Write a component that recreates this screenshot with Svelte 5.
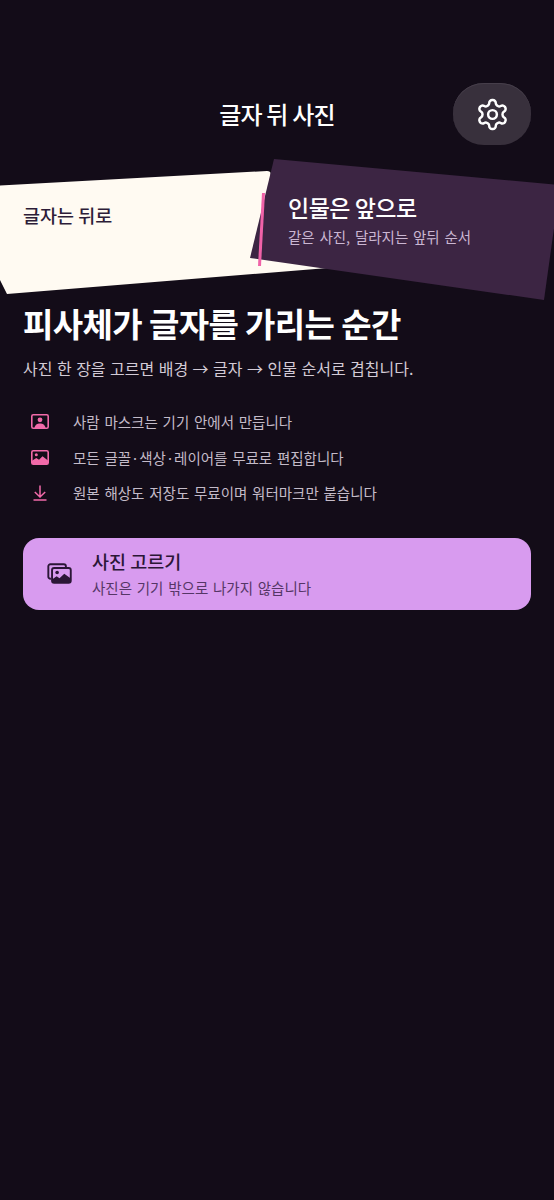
<script>
  const bullets = [
    { icon: 'person', text: '사람 마스크는 기기 안에서 만듭니다' },
    { icon: 'image', text: '모든 글꼴·색상·레이어를 무료로 편집합니다' },
    { icon: 'down', text: '원본 해상도 저장도 무료이며 워터마크만 붙습니다' }
  ];
</script>

<main class="page">
  <header class="top">
    <span></span>
    <h1>글자 뒤 사진</h1>
    <button class="gear" aria-label="설정">
      <svg viewBox="0 0 24 24" width="35" height="35" fill="none" stroke="currentColor" stroke-width="1.700" stroke-linecap="round" stroke-linejoin="round">
        <path d="M12.22 2h-.44a2 2 0 0 0-2 2v.18a2 2 0 0 1-1 1.73l-.43.25a2 2 0 0 1-2 0l-.15-.08a2 2 0 0 0-2.73.73l-.22.38a2 2 0 0 0 .73 2.73l.15.1a2 2 0 0 1 1 1.72v.51a2 2 0 0 1-1 1.74l-.15.09a2 2 0 0 0-.73 2.73l.22.38a2 2 0 0 0 2.73.73l.15-.08a2 2 0 0 1 2 0l.43.25a2 2 0 0 1 1 1.73V20a2 2 0 0 0 2 2h.44a2 2 0 0 0 2-2v-.18a2 2 0 0 1 1-1.73l.43-.25a2 2 0 0 1 2 0l.15.08a2 2 0 0 0 2.73-.73l.22-.39a2 2 0 0 0-.73-2.73l-.15-.08a2 2 0 0 1-1-1.74v-.5a2 2 0 0 1 1-1.74l.15-.09a2 2 0 0 0 .73-2.73l-.22-.38a2 2 0 0 0-2.73-.73l-.15.08a2 2 0 0 1-2 0l-.43-.25a2 2 0 0 1-1-1.73V4a2 2 0 0 0-2-2z"/>
        <circle cx="12" cy="12" r="3"/>
      </svg>
    </button>
  </header>

  <section class="hero">
    <svg class="shapes" viewBox="0 0 554 150" width="554" height="150">
      <path d="M-10 31 L267 16 Q271.500 16 270.500 20 L340 112 L7 139 L0 125 Z" fill="#fffaf2"/>
      <path d="M274 4 L560 30 L544 145 L250 103 Z" fill="#3c2543"/>
      <path d="M263.500 38 L259.500 111" stroke="#f062a8" stroke-width="3" fill="none"/>
    </svg>
    <p class="back">글자는 뒤로</p>
    <div class="front">
      <p class="front-title">인물은 앞으로</p>
      <p class="front-sub">같은 사진, 달라지는 앞뒤 순서</p>
    </div>
  </section>

  <section class="intro">
    <h2>피사체가 글자를 가리는 순간</h2>
    <p>사진 한 장을 고르면 배경 → 글자 → 인물 순서로 겹칩니다.</p>
  </section>

  <ul class="bullets">
    {#each bullets as b}
      <li>
        <span class="ico">
          {#if b.icon === 'person'}
            <svg viewBox="0 0 18 15" width="18" height="15">
              <rect x="0.800" y="0.800" width="16.400" height="13.400" rx="1.500" fill="none" stroke="currentColor" stroke-width="1.600"/>
              <circle cx="9" cy="5.800" r="2.400" fill="currentColor"/>
              <path d="M3.500 14 C3.800 10.800 6.300 9.500 9 9.500 S14.200 10.800 14.500 14 Z" fill="currentColor"/>
            </svg>
          {:else if b.icon === 'image'}
            <svg viewBox="0 0 18 15" width="18" height="15">
              <rect x="0.800" y="0.800" width="16.400" height="13.400" rx="1.500" fill="none" stroke="currentColor" stroke-width="1.600"/>
              <circle cx="5.300" cy="4.800" r="1.500" fill="currentColor"/>
              <path d="M1 14 V10.800 L5.300 8 L8 9.800 L11.500 6.200 L17 10.500 V14 Z" fill="currentColor"/>
            </svg>
          {:else}
            <svg class="down" viewBox="0 0 14 16" width="14" height="16" fill="none" stroke="currentColor" stroke-width="1.500">
              <path d="M7 0.500 V12 M1.800 7 L7 12 L12.200 7 M0.500 15 H13.500"/>
            </svg>
          {/if}
        </span>
        <span>{b.text}</span>
      </li>
    {/each}
  </ul>

  <button class="pick">
    <svg viewBox="0 0 26 22" width="25" height="21">
      <path d="M4 16.500 H3.500 A2.200 2.200 0 0 1 1.300 14.300 V3.500 A2.200 2.200 0 0 1 3.500 1.300 H17.500 A2.200 2.200 0 0 1 19.700 3.500 V4.500" fill="none" stroke="currentColor" stroke-width="2"/>
      <rect x="5.200" y="5.200" width="19.600" height="15.600" rx="2.200" fill="none" stroke="currentColor" stroke-width="2"/>
      <circle cx="10.500" cy="10" r="1.900" fill="currentColor"/>
      <path d="M5.500 20.500 V17 L10 14 L13 16 L18 11.200 L24.500 16 V20.500 Z" fill="currentColor"/>
    </svg>
    <span class="pick-text">
      <strong>사진 고르기</strong>
      <small>사진은 기기 밖으로 나가지 않습니다</small>
    </span>
  </button>
</main>

<style>
  :global(body) {
    margin: 0;
    background: #130c18;
  }
  .page {
    min-height: 1200px;
    box-sizing: border-box;
    padding-top: 83px;
    background: #130c18;
    font-family: "Noto Sans CJK KR", "Noto Sans", sans-serif;
    color: #fff;
    overflow: hidden;
  }
  .top {
    display: grid;
    grid-template-columns: 78px 1fr 78px;
    align-items: center;
    padding: 0 23px;
  }
  h1 {
    margin: 0;
    text-align: center;
    font-size: 24px;
    line-height: 62px;
    font-weight: 500;
    color: #fff;
    letter-spacing: -0.8px;
  }
  .gear {
    width: 78px;
    height: 62px;
    padding: 0;
    border: none;
    border-radius: 31px / 30px;
    background: #38303c;
    color: #fff;
    display: flex;
    align-items: center;
    justify-content: center;
    box-shadow: inset 0 1px 0 #463e4a;
  }
  .hero {
    position: relative;
    height: 150px;
    margin-top: 10px;
  }
  .shapes {
    position: absolute;
    left: 0;
    top: 0;
    display: block;
  }
  .back {
    position: absolute;
    left: 23px;
    top: 47px;
    margin: 0;
    font-size: 18.500px;
    line-height: 26px;
    font-weight: 500;
    color: #2d1c38;
  }
  .front {
    position: absolute;
    left: 288px;
    top: 35px;
  }
  .front-title {
    margin: 0;
    font-size: 23px;
    line-height: 34px;
    font-weight: 500;
    color: #fff;
    letter-spacing: -0.5px;
  }
  .front-sub {
    margin: 3px 0 0;
    font-size: 14.5px;
    line-height: 20px;
    color: #cbb7d3;
    word-spacing: 1.500px;
  }
  .intro {
    padding: 0 23px;
    margin-top: -3px;
  }
  h2 {
    margin: 0;
    font-size: 33px;
    line-height: 42px;
    font-weight: 700;
    color: #fff;
    letter-spacing: -0.6px;
  }
  .intro p {
    margin: 12px 0 0;
    font-size: 16px;
    line-height: 24px;
    color: #d3cbd6;
    word-spacing: 0.900px;
  }
  .bullets {
    list-style: none;
    margin: 29px 0 0;
    padding: 0 23px;
    display: flex;
    flex-direction: column;
    gap: 10px;
  }
  .bullets li {
    display: flex;
    align-items: center;
    height: 25.500px;
    font-size: 14.5px;
    color: #c4bbc8;
    word-spacing: 1.500px;
  }
  .ico {
    width: 50px;
    padding-left: 8px;
    box-sizing: border-box;
    flex: none;
    display: flex;
    color: #f26aa9;
  }
  .ico .down {
    margin-left: 2px;
  }
  .pick {
    margin: 32px 23px 0;
    width: 508px;
    height: 72px;
    box-sizing: border-box;
    border: none;
    border-radius: 16px;
    background: #d89bef;
    color: #2b1636;
    display: flex;
    align-items: center;
    gap: 20px;
    padding: 0 0 0 24px;
    font-family: inherit;
    text-align: left;
  }
  .pick-text {
    display: flex;
    flex-direction: column;
  }
  .pick strong {
    font-size: 18.500px;
    line-height: 26px;
    font-weight: 500;
    margin-top: -1px;
  }
  .pick small {
    font-size: 14.5px;
    line-height: 22px;
    color: #553666;
    margin-top: 3px;
    word-spacing: 1.500px;
  }
</style>
